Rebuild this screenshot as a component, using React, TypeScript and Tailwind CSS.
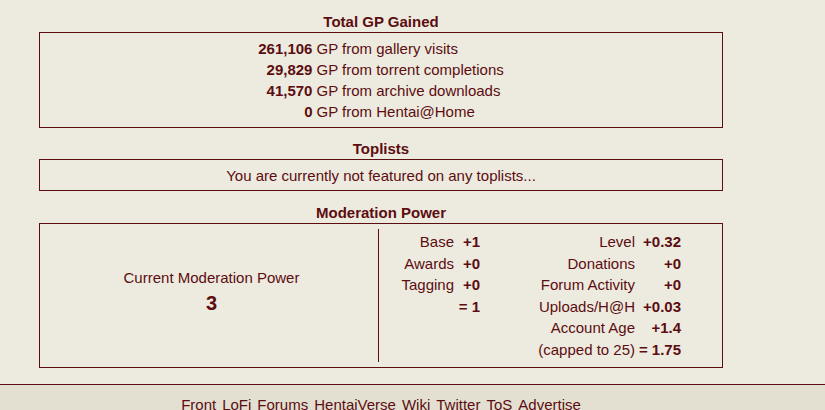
const gp = [
  { n: '261,106', label: 'GP from gallery visits' },
  { n: '29,829', label: 'GP from torrent completions' },
  { n: '41,570', label: 'GP from archive downloads' },
  { n: '0', label: 'GP from Hentai@Home' },
];

const modLeft = [
  ['Base', '+1'],
  ['Awards', '+0'],
  ['Tagging', '+0'],
  ['', '= 1'],
];

const modRight = [
  ['Level', '+0.32'],
  ['Donations', '+0'],
  ['Forum Activity', '+0'],
  ['Uploads/H@H', '+0.03'],
  ['Account Age', '+1.4'],
  ['(capped to 25)', '= 1.75'],
];

const links = ['Front', 'LoFi', 'Forums', 'HentaiVerse', 'Wiki', 'Twitter', 'ToS', 'Advertise'];

const Title = ({ children }: { children: React.ReactNode }) => (
  <h2 className="text-center font-bold leading-[21px]">{children}</h2>
);

export default function App() {
  return (
    <div className="min-h-[410px] bg-[#E3E0D1] text-[#5C0D11] text-[15px] font-['Liberation_Sans',Arial,sans-serif]">
      <div className="bg-[#EDEBDF] border-b border-[#5C0D11] pt-[11px] pb-[16px]">
        <div className="w-[762px]">
          {/* Total GP */}
          <Title>Total GP Gained</Title>
          <div className="mx-[39px] border border-[#5C0D11] py-[5px]">
            <div className="mx-auto w-fit grid grid-cols-[auto_auto] gap-x-[4px] leading-[21px]">
              {gp.map((r) => (
                <div key={r.label} className="contents">
                  <span className="text-right font-bold">{r.n}</span>
                  <span>{r.label}</span>
                </div>
              ))}
            </div>
          </div>

          {/* Toplists */}
          <div className="mt-[10px]">
            <Title>Toplists</Title>
          </div>
          <div className="mx-[39px] border border-[#5C0D11] pt-[5px] pb-[4px] text-center leading-[21px]">
            You are currently not featured on any toplists...
          </div>

          {/* Moderation power */}
          <div className="mt-[11px]">
            <Title>Moderation Power</Title>
          </div>
          <div className="mx-[39px] border border-[#5C0D11] p-[5px] flex h-[145px]">
            <div className="w-[334px] border-r border-[#5C0D11] flex flex-col items-center justify-center pb-[10px]">
              <div className="leading-[21px]">Current Moderation Power</div>
              <div className="mt-[3px] text-[20px] font-bold leading-[24px]">3</div>
            </div>
            <div className="flex pt-[2px] leading-[21.5px]">
              <div className="grid grid-cols-[75px_26px] content-start">
                {modLeft.map(([k, v], i) => (
                  <div key={i} className="contents">
                    <span className="text-right">{k}</span>
                    <span className="text-right font-bold">{v}</span>
                  </div>
                ))}
              </div>
              <div className="grid grid-cols-[155px_46px] content-start">
                {modRight.map(([k, v]) => (
                  <div key={k} className="contents">
                    <span className="text-right">{k}</span>
                    <span className="text-right font-bold">{v}</span>
                  </div>
                ))}
              </div>
            </div>
          </div>
        </div>
      </div>

      {/* Footer */}
      <div className="w-[762px] pt-[9px] flex justify-center gap-[6px] leading-[21px]">
        {links.map((l) => (
          <a key={l} href="#" className="text-[#5C0D11] no-underline">
            {l}
          </a>
        ))}
      </div>
    </div>
  );
}
